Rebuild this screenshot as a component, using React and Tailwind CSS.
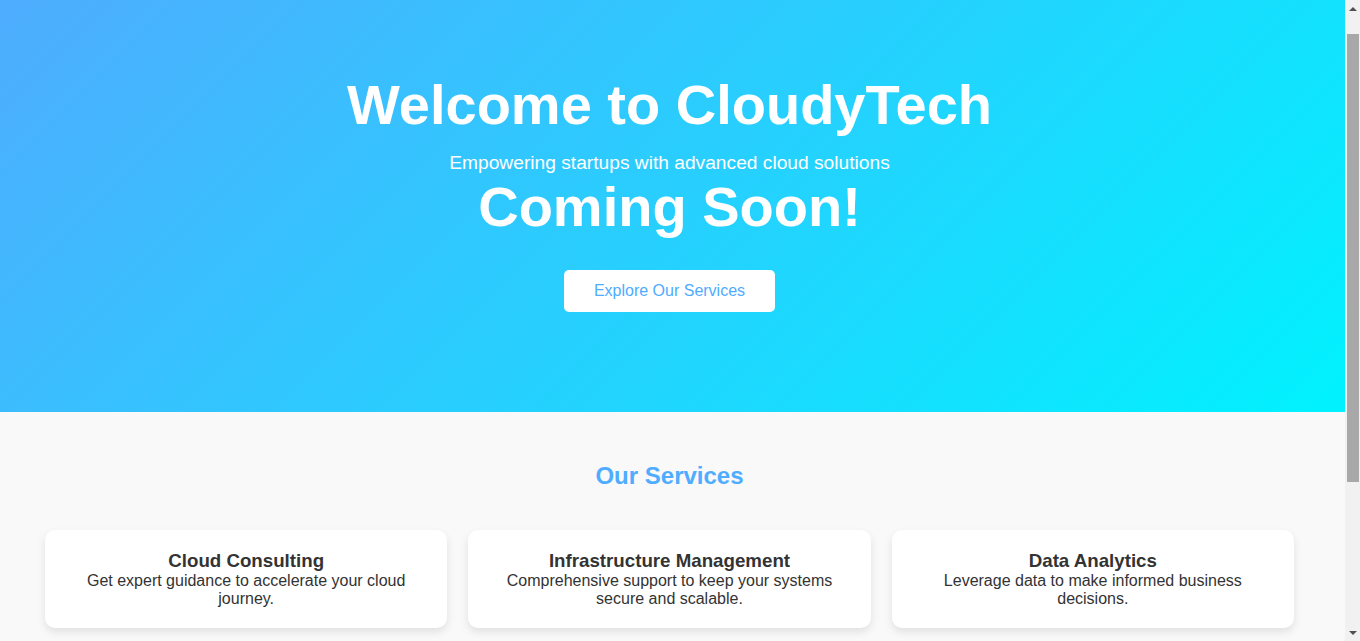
import React from 'react';

const services = [
  {
    title: 'Cloud Consulting',
    text: 'Get expert guidance to accelerate your cloud journey.',
  },
  {
    title: 'Infrastructure Management',
    text: 'Comprehensive support to keep your systems secure and scalable.',
  },
  {
    title: 'Data Analytics',
    text: 'Leverage data to make informed business decisions.',
  },
];

// window scrollbar, drawn since the browser hides it
const ScrollBar = () => (
  <div className="w-[15px] shrink-0 h-screen bg-[#f1f1f1] flex flex-col items-center">
    <div className="h-[17px] flex items-center justify-center">
      <svg width="8" height="4" viewBox="0 0 8 4">
        <path d="M0 4 L4 0 L8 4 Z" fill="#505050" />
      </svg>
    </div>
    <div className="mt-[17px] h-[448px] w-[12px] bg-[#a8a8a8]" />
    <div className="flex-1" />
    <div className="h-[17px] flex items-center justify-center">
      <svg width="8" height="4" viewBox="0 0 8 4">
        <path d="M0 0 L8 0 L4 4 Z" fill="#505050" />
      </svg>
    </div>
  </div>
);

const App = () => {
  return (
    <div className="flex h-screen overflow-hidden font-['Liberation_Sans',Arial,sans-serif]">
      <main className="flex-1 min-w-0 h-screen overflow-y-auto bg-[#f9f9f9] text-[#333]">
        {/* Hero */}
        <header className="flex flex-col items-center text-center text-white pl-5 pr-[26px] pt-[73px] pb-[100px] bg-[linear-gradient(135deg,#4facfe_0%,#00f2fe_100%)]">
          <h1 className="text-[56px] leading-[64px] font-bold">Welcome to CloudyTech</h1>
          <p className="mt-[15px] text-[19.2px] leading-[22px]">
            Empowering startups with advanced cloud solutions
          </p>
          <h2 className="mt-px text-[56px] leading-[64px] font-bold">Coming Soon!</h2>
          <button className="mt-[31px] bg-white text-[#4facfe] text-base leading-[18px] px-[30px] py-3 rounded-[5px]">
            Explore Our Services
          </button>
        </header>

        {/* Services */}
        <section className="pt-[50px] pb-[50px] pl-[45px] pr-[51px]">
          <h2 className="text-center text-2xl leading-[28px] font-bold text-[#4facfe] mb-[40px]">
            Our Services
          </h2>
          <div className="grid grid-cols-3 gap-[21px]">
            {services.map((s) => (
              <div
                key={s.title}
                className="bg-white rounded-[10px] p-5 text-center shadow-[0_4px_8px_rgba(0,0,0,0.1)]"
              >
                <h3 className="text-[18.72px] leading-[21.5px] font-bold">{s.title}</h3>
                <p className="text-base leading-[18.4px]">{s.text}</p>
              </div>
            ))}
          </div>
        </section>

        <footer className="bg-[#333] text-white text-center text-sm py-[80px]">
          © 2024 CloudyTech. All rights reserved.
        </footer>
      </main>
      <ScrollBar />
    </div>
  );
};

export default App;
